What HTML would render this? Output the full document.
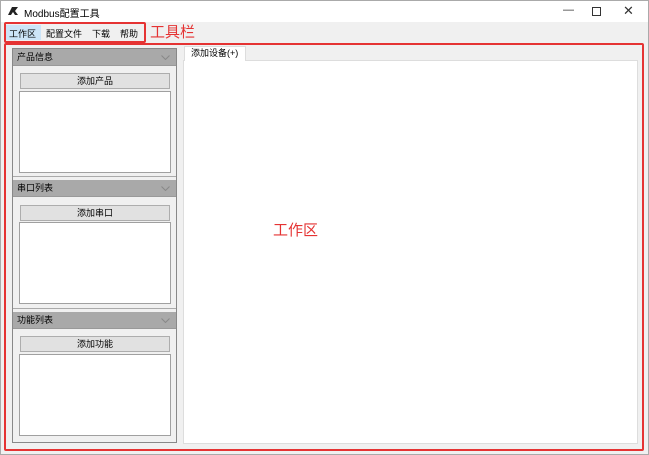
<!DOCTYPE html>
<html><head><meta charset="utf-8"><style>
*{margin:0;padding:0;box-sizing:border-box}
body{width:649px;height:455px;background:#f0f0f0;font-family:"Liberation Sans","Noto Sans CJK SC",sans-serif;font-size:9px;color:#000;position:relative;overflow:hidden}
.a{position:absolute}
.hd{background:#a9a9a9;border-bottom:1px solid #999;height:17px;padding-left:4px;line-height:16px;left:13px;width:163px}
.hd svg{position:absolute;right:6px;top:6px}
.btn{background:#e1e1e1;border:1px solid #adadad;left:20px;width:150px;height:16px;text-align:center;line-height:14px}
.lst{background:#fff;border:1px solid #a0a0a0;left:19px;width:152px}
</style></head><body>
<div class="a" style="left:0;top:0;width:649px;height:455px;border:1px solid #aaa"></div>
<div class="a" style="left:1px;top:1px;width:647px;height:21px;background:#fff"></div>
<svg class="a" style="left:7px;top:6px" width="12" height="10"><path d="M1 9 L5 1 L11 1 L8 5 L11 9 L8 9 L6 6 L4 9Z" fill="#222"/></svg>
<div class="a" style="left:24px;top:5px;font-size:10px">Modbus配置工具</div>
<div class="a" style="left:563px;top:4px;font-size:11px;color:#333">&#x2014;</div>
<div class="a" style="left:592px;top:7px;width:9px;height:9px;border:1px solid #333"></div>
<div class="a" style="left:623px;top:3px;font-size:13px;color:#333">&#x2715;</div>
<div class="a" style="left:5px;top:25px;width:36px;height:15px;background:#cce4f7"></div>
<div class="a" style="left:9px;top:27px">工作区</div>
<div class="a" style="left:46px;top:27px">配置文件</div>
<div class="a" style="left:92px;top:27px">下载</div>
<div class="a" style="left:120px;top:27px">帮助</div>
<div class="a" style="left:4px;top:22px;width:142px;height:21px;border:2px solid #e53333;border-radius:2px"></div>
<div class="a" style="left:150px;top:21px;color:#e53333;font-size:15px">工具栏</div>
<div class="a" style="left:12px;top:48px;width:165px;height:395px;border:1px solid #888;border-top:2px solid #888"></div>
<div class="a hd" style="top:49px">产品信息<svg width="9" height="5"><path d="M0.5 0.5 L4.5 4.5 L8.5 0.5" stroke="#888" fill="none"/></svg></div>
<div class="a btn" style="top:73px">添加产品</div>
<div class="a lst" style="top:91px;height:82px"></div>
<div class="a" style="left:13px;top:176px;width:163px;border-top:1px solid #aaa"></div>
<div class="a hd" style="top:180px">串口列表<svg width="9" height="5"><path d="M0.5 0.5 L4.5 4.5 L8.5 0.5" stroke="#888" fill="none"/></svg></div>
<div class="a btn" style="top:205px">添加串口</div>
<div class="a lst" style="top:222px;height:82px"></div>
<div class="a" style="left:13px;top:308px;width:163px;border-top:1px solid #aaa"></div>
<div class="a hd" style="top:312px">功能列表<svg width="9" height="5"><path d="M0.5 0.5 L4.5 4.5 L8.5 0.5" stroke="#888" fill="none"/></svg></div>
<div class="a btn" style="top:336px">添加功能</div>
<div class="a lst" style="top:354px;height:82px"></div>
<div class="a" style="left:183px;top:60px;width:455px;height:384px;background:#fff;border:1px solid #ddd"></div>
<div class="a" style="left:184px;top:46px;width:62px;height:15px;background:#fff;border:1px solid #ddd;border-bottom:none;padding-left:6px;line-height:13px">添加设备(+)</div>
<div class="a" style="left:273px;top:219px;color:#e53333;font-size:15px">工作区</div>
<div class="a" style="left:4px;top:43px;width:640px;height:408px;border:2px solid #e53333;border-radius:2px"></div>
</body></html>
